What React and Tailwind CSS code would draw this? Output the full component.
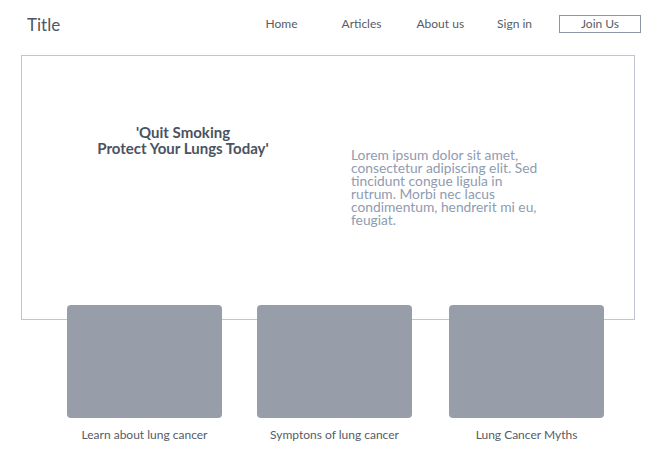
export default function App() {
  const cards = ["Learn about lung cancer", "Symptons of lung cancer", "Lung Cancer Myths"];
  return (
    <div className="w-[655px] h-[463px] bg-white font-['Lato','Noto_Sans',sans-serif] text-[#4b5261] overflow-hidden">
      <header className="flex items-center h-[48px] pl-[27px] pr-[14px]">
        <div className="text-[17px] leading-none text-[#4e5562] pt-[1px]">Title</div>
        <nav className="ml-auto flex items-center text-[12px] text-[#555c68]">
          <span>Home</span>
          <span className="ml-[44px]">Articles</span>
          <span className="ml-[35px]">About us</span>
          <span className="ml-[33px]">Sign in</span>
          <span className="ml-[27px] w-[82px] h-[18px] border border-[#8d96a6] flex items-center justify-center">Join Us</span>
        </nav>
      </header>
      <section className="ml-[21px] mt-[7px] w-[614px] h-[265px] border border-[#bfc6d2] flex">
        <div className="w-[322px] pt-[68px] text-center text-[15px] leading-[16px] font-bold text-[#4b5261]">
          'Quit Smoking<br />Protect Your Lungs Today'
        </div>
        <p className="ml-[7px] pt-[92px] text-[13.8px] leading-[13px] text-[#8f9bb1]">
          Lorem ipsum dolor sit amet,<br />
          consectetur adipiscing elit. Sed<br />
          tincidunt congue ligula in<br />
          rutrum. Morbi nec lacus<br />
          condimentum, hendrerit mi eu,<br />
          feugiat.
        </p>
      </section>
      <div className="relative -mt-[15px] ml-[67px] flex">
        {cards.map((c, i) => (
          <div key={c} className={"w-[155px] flex flex-col items-center " + (i === 1 ? "ml-[35px]" : i === 2 ? "ml-[37px]" : "")}>
            <div className="w-[155px] h-[113px] rounded-[4px] bg-[#979ea9]" />
            <div className="mt-[10px] text-[12px] leading-[14px] text-[#555c68]">{c}</div>
          </div>
        ))}
      </div>
    </div>
  );
}
